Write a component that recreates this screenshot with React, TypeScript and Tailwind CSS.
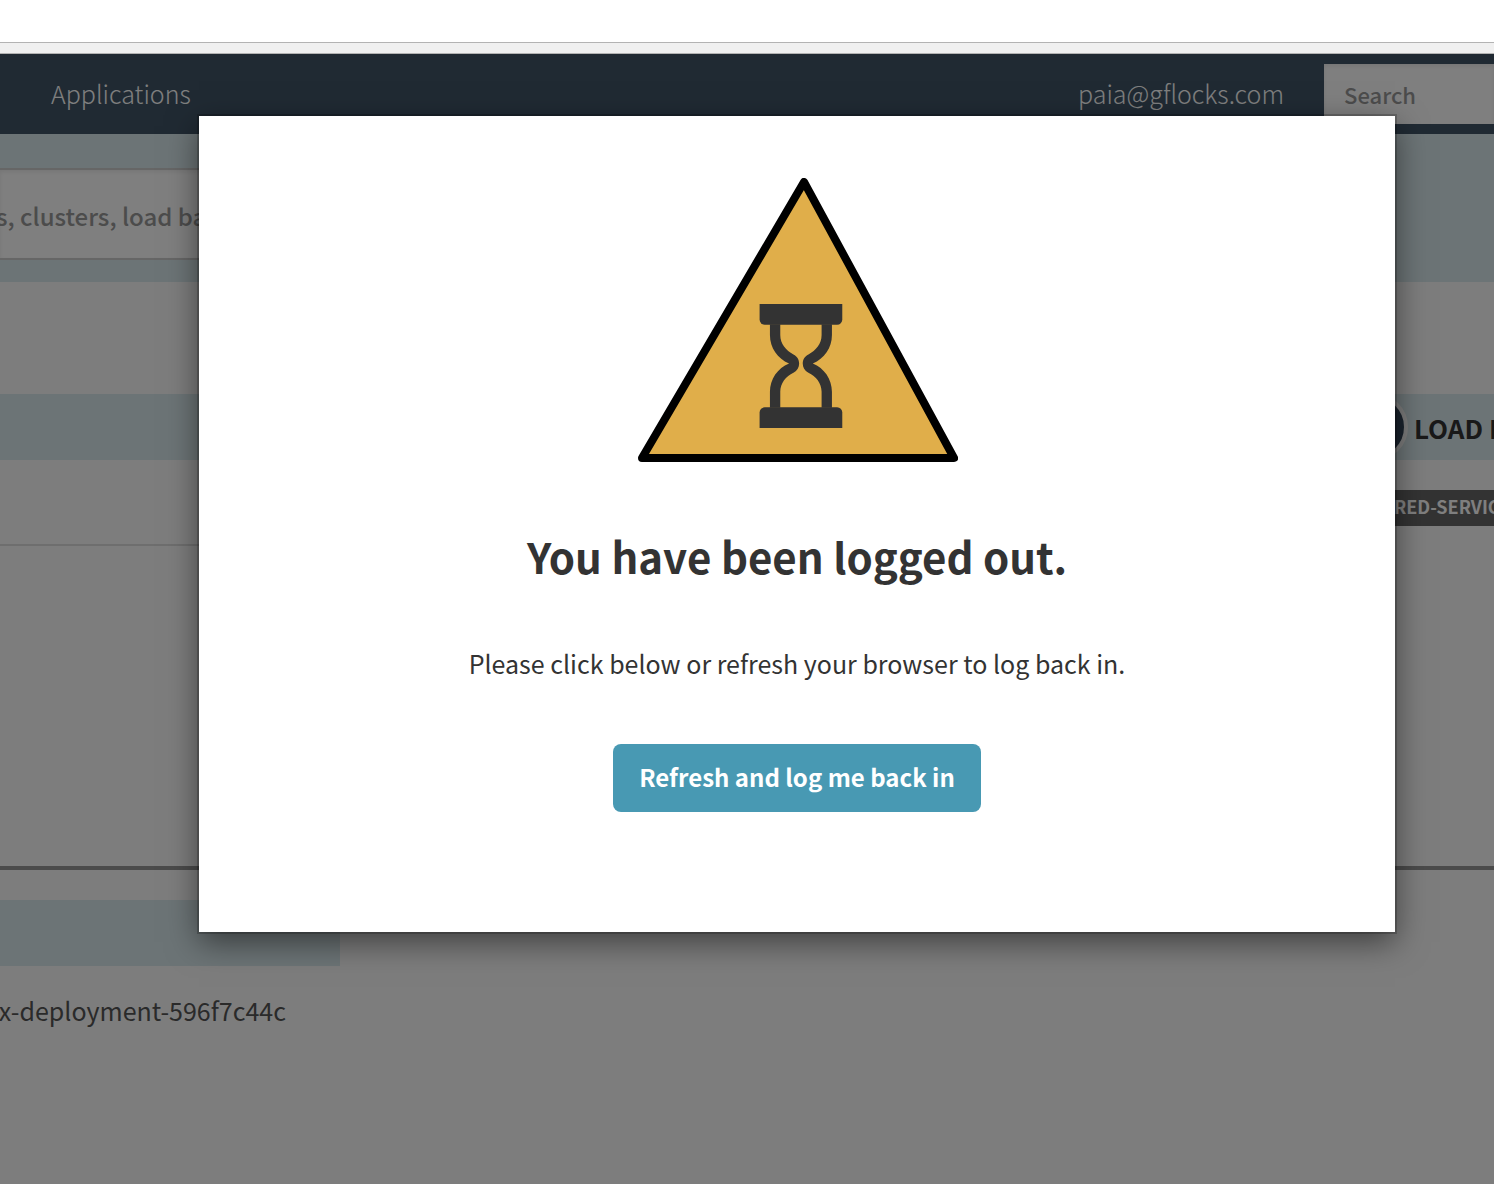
import React from "react";

function HourglassWarning() {
  return (
    <svg width="322" height="284" viewBox="-2 0 322 284" role="img" aria-label="Session expired" className="shrink-0">
      <path d="M166 4 L316 280 L4 280 Z" fill="#e0ae4a" stroke="#000" strokeWidth="8" strokeLinejoin="round" />
      <g transform="translate(121.6 126) scale(5.167)" fill="#333">
        <path d="M0 0H16V3A1 1 0 0 1 15 4H1A1 1 0 0 1 0 3Z" />
        <path d="M0 24H16V21A1 1 0 0 0 15 20H1A1 1 0 0 0 0 21Z" />
        <path d="M2 3.9H4V6C4 7.7 5.1 9 6.55 9.75C7.3 10.1 7.65 10.8 7.65 11.5C7.65 12.2 7.3 12.9 6.55 13.3C5.1 14 4 15.3 4 17V20.1H2V17C2 14.5 3.5 12.4 5.7 11.5C3.5 10.6 2 8.5 2 6Z" />
        <path
          transform="translate(16 0) scale(-1 1)"
          d="M2 3.9H4V6C4 7.7 5.1 9 6.55 9.75C7.3 10.1 7.65 10.8 7.65 11.5C7.65 12.2 7.3 12.9 6.55 13.3C5.1 14 4 15.3 4 17V20.1H2V17C2 14.5 3.5 12.4 5.7 11.5C3.5 10.6 2 8.5 2 6Z"
        />
      </g>
    </svg>
  );
}

function NavBar() {
  return (
    <nav className="flex h-20 items-center bg-[#405466] pl-[51px] leading-8 font-light text-white">
      <a href="#applications" className="pb-0.5">
        Applications
      </a>
      <a href="#account" className="ml-auto pb-0.5">
        paia@gflocks.com
      </a>
      <input
        type="search"
        aria-label="Search"
        placeholder="Search"
        className="ml-10 h-[60px] w-[170px] bg-white px-5 text-[22px] font-medium shadow-[inset_0_2px_4px_rgba(0,0,0,0.08)] placeholder:text-[#999]"
      />
    </nav>
  );
}

function Background() {
  return (
    <div className="flex-1 bg-[#fafafa] text-[25px] leading-8 text-[#555]">
      <NavBar />
      <div className="bg-[#d8e8ec] pt-[34px] pb-[22px]">
        <input
          type="text"
          aria-label="Filter"
          placeholder="s, clusters, load balancers"
          className="block h-[92px] w-4/5 border-y-2 border-[#ccc] bg-white pt-0.5 -indent-1 text-[24px] font-medium shadow-[inset_0_2px_4px_rgba(0,0,0,0.08)] placeholder:text-[#999]"
        />
      </div>

      <div className="mt-28 flex h-[66px] items-center overflow-x-clip bg-[#d8e8ec]">
        <div className="ml-auto flex w-[154px] items-center gap-[6px]">
          <span className="size-[68px] shrink-0 rounded-full border-4 border-[#fafafa] bg-[#34465a]" />
          <span className="pt-0.5 text-[26px] font-bold whitespace-nowrap text-[#333]">LOAD B</span>
        </div>
      </div>

      <div className="flex justify-between">
        <div className="h-[86px] w-[340px] border-b-2 border-[#ddd]" />
        <div className="mt-[30px] flex h-9 w-[154px] items-center overflow-hidden bg-[#666] pb-1 pl-[54px] text-[18px] font-bold whitespace-nowrap text-white">
          RED-SERVIC
        </div>
      </div>

      <div className="h-[324px] border-b-4 border-[#969696]" />
      <div className="mt-[30px] h-[66px] w-[340px] bg-[#d8e8ec]" />
      <div className="mt-7 flex w-[286px] justify-end whitespace-nowrap">x-deployment-596f7c44c</div>
    </div>
  );
}

function LoggedOutDialog() {
  return (
    <div
      role="dialog"
      aria-modal="true"
      aria-labelledby="dialog-title"
      className="flex w-full flex-col items-center bg-white pt-[62px] pb-[120px] text-center text-[25px] text-[#333] shadow-[0_0_0_2px_rgba(0,0,0,0.2),0_10px_30px_rgba(0,0,0,0.5)]"
    >
      <HourglassWarning />
      <h1 id="dialog-title" className="mt-[62px] text-[42px] leading-[64px] font-bold">
        You have been logged out.
      </h1>
      <p className="mt-[59px] leading-8">Please click below or refresh your browser to log back in.</p>
      <button type="button" className="mt-[65px] h-[68px] rounded-lg bg-[#4899b3] px-[26px] pb-0.5 text-[24px] font-bold text-white">
        Refresh and log me back in
      </button>
    </div>
  );
}

export default function App() {
  return (
    <div className="flex min-h-screen flex-col bg-white font-['Noto_Sans_CJK_SC','Open_Sans',sans-serif]">
      <div className="h-[42px] shrink-0 bg-white" />
      <div className="h-3 shrink-0 border-y border-[#b3b3b3] bg-[#f0f0f0]" />
      <main className="relative flex flex-1 flex-col overflow-hidden">
        <Background />
        <div className="absolute inset-0 bg-black/50 pt-[62px] pr-[99px] pl-[199px]">
          <LoggedOutDialog />
        </div>
      </main>
    </div>
  );
}
